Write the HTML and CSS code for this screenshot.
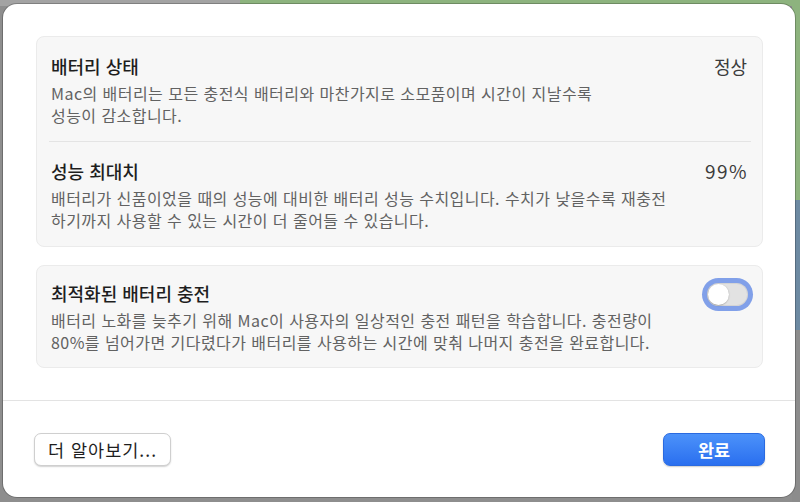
FILE: index.html
```html
<!DOCTYPE html>
<html lang="ko">
<head>
<meta charset="utf-8">
<title>배터리</title>
<link rel="stylesheet" href="styles.css">
</head>
<body>
<div class="dialog">
  <div class="content">
    <section class="card">
      <div class="row">
        <div class="text">
          <div class="title">배터리 상태</div>
          <div class="desc">Mac의 배터리는 모든 충전식 배터리와 마찬가지로 소모품이며 시간이 지날수록<br>성능이 감소합니다.</div>
        </div>
        <div class="value">정상</div>
      </div>
      <div class="sep"></div>
      <div class="row">
        <div class="text">
          <div class="title">성능 최대치</div>
          <div class="desc">배터리가 신품이었을 때의 성능에 대비한 배터리 성능 수치입니다. 수치가 낮을수록 재충전<br>하기까지 사용할 수 있는 시간이 더 줄어들 수 있습니다.</div>
        </div>
        <div class="value num">99%</div>
      </div>
    </section>
    <section class="card">
      <div class="row row-toggle">
        <div class="text">
          <div class="title">최적화된 배터리 충전</div>
          <div class="desc">배터리 노화를 늦추기 위해 Mac이 사용자의 일상적인 충전 패턴을 학습합니다. 충전량이<br>80%를 넘어가면 기다렸다가 배터리를 사용하는 시간에 맞춰 나머지 충전을 완료합니다.</div>
        </div>
        <div class="toggle"><span class="knob"></span></div>
      </div>
    </section>
  </div>
  <div class="footer">
    <button class="btn btn-secondary">더 알아보기...</button>
    <button class="btn btn-primary">완료</button>
  </div>
</div>
</body>
</html>
```
FILE: styles.css
```css
html, body {
  margin: 0;
  padding: 0;
}
body {
  width: 800px;
  height: 502px;
  overflow: hidden;
  font-family: "Noto Sans CJK KR", "Noto Sans", sans-serif;
  background:
    linear-gradient(to right, #a3a3a3 0, #a3a3a3 240px, #8db37e 240px, #8db37e 100%) top left / 100% 6px no-repeat,
    linear-gradient(to bottom, #8db37e 0, #8db37e 200px, #6d8aa2 200px, #6d8aa2 330px, #8c8c8c 330px) top right / 8px 100% no-repeat,
    #8e8e8e;
}
.dialog {
  margin: 4px 5px 5px 3px;
  background: #ffffff;
  border-radius: 14px;
  box-shadow: 0 0 0 1px rgba(0, 0, 0, 0.22);
  display: flex;
  flex-direction: column;
}
.content {
  padding: 32px 32px 32px 33px;
  display: flex;
  flex-direction: column;
  gap: 18px;
  border-bottom: 1px solid #e3e3e3;
}
.card {
  background: #f7f7f7;
  border: 1px solid #ebebeb;
  border-radius: 8px;
  display: flex;
  flex-direction: column;
}
.row {
  display: flex;
  justify-content: space-between;
  align-items: flex-start;
  padding: 18px 15px 15px 14px;
}
.row-toggle {
  padding: 16px 14px 14px 14px;
}
.sep {
  height: 1px;
  background: #e4e4e4;
  margin: 0 11px 0 12px;
}
.title {
  font-size: 18px;
  line-height: 22px;
  font-weight: 500;
  color: #1e1e1e;
}
.desc {
  margin-top: 5px;
  font-size: 16px;
  letter-spacing: 0.45px;
  line-height: 22px;
  color: #626262;
  white-space: nowrap;
}
.value {
  font-size: 18px;
  line-height: 22px;
  color: #3c3c3c;
}
.num {
  font-size: 19px;
  letter-spacing: 1.5px;
  margin-right: -1px;
}
.toggle {
  margin-top: 1px;
  width: 41px;
  height: 23px;
  border-radius: 12px;
  background: #e2e2e2;
  box-shadow: inset 0 0 0 1px rgba(0,0,0,0.06), 0 0 0 5px rgba(72, 118, 226, 0.68);
  display: flex;
  align-items: center;
  padding: 0 1px;
  box-sizing: border-box;
}
.knob {
  width: 21px;
  height: 21px;
  border-radius: 50%;
  background: #ffffff;
  box-shadow: 0 0.5px 1.5px rgba(0,0,0,0.3);
}
.footer {
  display: flex;
  justify-content: space-between;
  align-items: center;
  padding: 32px 30px 31px 31px;
}
.btn {
  font-family: "Noto Sans CJK KR", "Noto Sans", sans-serif;
  font-size: 17.5px;
  height: 33px;
  border-radius: 7px;
  padding: 0;
  margin: 0;
  cursor: default;
}
.btn-secondary {
  width: 137px;
  background: #ffffff;
  color: #1e1e1e;
  letter-spacing: 1px;
  border: 1px solid #cfcfcf;
  box-shadow: 0 1px 1.5px rgba(0, 0, 0, 0.18);
}
.btn-primary {
  width: 102px;
  background: linear-gradient(to bottom, #4c92fa, #2a6fef);
  color: #ffffff;
  font-weight: 700;
  border: 1px solid #2a6ae0;
  box-shadow: 0 1px 1.5px rgba(0, 0, 0, 0.2);
}
```
